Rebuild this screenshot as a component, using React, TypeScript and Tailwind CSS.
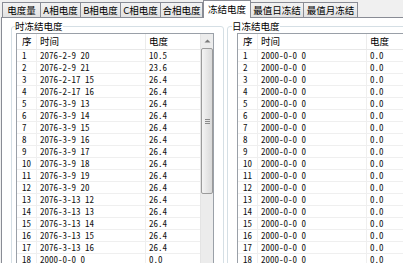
import React from "react";

const leftRows: [string, string, string][] = [
  ["1", "2076-2-9 20", "10.5"],
  ["2", "2076-2-9 21", "23.6"],
  ["3", "2076-2-17 15", "26.4"],
  ["4", "2076-2-17 16", "26.4"],
  ["5", "2076-3-9 13", "26.4"],
  ["6", "2076-3-9 14", "26.4"],
  ["7", "2076-3-9 15", "26.4"],
  ["8", "2076-3-9 16", "26.4"],
  ["9", "2076-3-9 17", "26.4"],
  ["10", "2076-3-9 18", "26.4"],
  ["11", "2076-3-9 19", "26.4"],
  ["12", "2076-3-9 20", "26.4"],
  ["13", "2076-3-13 12", "26.4"],
  ["14", "2076-3-13 13", "26.4"],
  ["15", "2076-3-13 14", "26.4"],
  ["16", "2076-3-13 15", "26.4"],
  ["17", "2076-3-13 16", "26.4"],
  ["18", "2000-0-0 0", "0.0"],
  ["19", "2000-0-0 0", "0.0"],
];

const rightRows: [string, string, string][] = Array.from({ length: 19 }, (_, i) => [
  String(i + 1),
  "2000-0-0 0",
  "0.0",
]);

function Table({ rows, scroll }: { rows: [string, string, string][]; scroll?: boolean }) {
  return (
    <div className="flex h-[260px] border border-[#9aa0a8] bg-white">
      <div className="flex-1 min-w-0 flex flex-col">
        <div className="grid grid-cols-[20px_109px_1fr] h-[16px] border-b border-[#e8e8e8] text-[9.5px] leading-[15px]">
          <div className="pl-[5px] border-r border-[#ececec]">序</div>
          <div className="pl-[3px] border-r border-[#ececec]">时间</div>
          <div className="pl-[3px] whitespace-nowrap">电度</div>
        </div>
        {rows.map((r, i) => (
          <div
            key={i}
            className="grid grid-cols-[20px_109px_1fr] h-[12px] border-b border-[#efefef] text-[9px] leading-[11px] text-[#111] font-['Noto_Sans_Mono_CJK_SC','Noto_Sans_CJK_SC',monospace]"
          >
            <div className="pl-[5px] border-r border-[#efefef] whitespace-pre">{r[0]}</div>
            <div className="pl-[3px] border-r border-[#efefef] whitespace-pre">{r[1]}</div>
            <div className="pl-[3px] whitespace-pre">{r[2]}</div>
          </div>
        ))}
      </div>
      {scroll && (
        <div className="w-[13px] flex flex-col bg-[#ececec] border-l border-[#e4e4e4]">
          <div className="h-[14px] flex items-center justify-center">
            <svg width="7" height="4" viewBox="0 0 7 4">
              <path d="M0.5 3.5 L3.5 0.5 L6.5 3.5 Z" fill="#7a7a7a" />
            </svg>
          </div>
          <div className="h-[146px] rounded-[2px] border border-[#9b9b9b] bg-linear-to-r from-[#f4f4f4] to-[#d9d9d9] flex flex-col items-center justify-center gap-[1px]">
            <div className="w-[5px] h-px bg-[#8a8a8a]" />
            <div className="w-[5px] h-px bg-[#8a8a8a]" />
            <div className="w-[5px] h-px bg-[#8a8a8a]" />
          </div>
        </div>
      )}
    </div>
  );
}

function Tab({ label, cls }: { label: string; cls: string }) {
  return (
    <div
      className={
        "h-[15px] flex items-center justify-center text-[9.5px] leading-[12px] whitespace-nowrap border-t border-[#898c95] bg-linear-to-b from-[#f3f3f3] to-[#e2e2e2] " +
        cls
      }
    >
      {label}
    </div>
  );
}

export default function App() {
  return (
    <div className="w-[403px] h-[263px] overflow-hidden bg-[#f0f0f0] text-black font-['Noto_Sans_CJK_SC',sans-serif]">
      <div className="flex items-end h-[17px] pl-[2px]">
        <Tab label="电度量" cls="w-[38px] border-l" />
        <Tab label="A相电度" cls="w-[40px] border-l" />
        <Tab label="B相电度" cls="w-[40px] border-l" />
        <Tab label="C相电度" cls="w-[40px] border-l" />
        <Tab label="合相电度" cls="w-[43px] border-l border-r" />
        <div className="relative z-10 -mb-px h-[18px] w-[48px] flex items-start justify-center pt-[2px] text-[9.5px] leading-[12px] whitespace-nowrap bg-white border-l border-t border-r border-[#898c95]">
          冻结电度
        </div>
        <Tab label="最值日冻结" cls="w-[53px] border-r" />
        <Tab label="最值月冻结" cls="w-[54px] border-r" />
      </div>
      <div className="ml-[1px] h-[260px] border-l border-t border-[#898c95] bg-white flex items-start pt-[2px]">
        <fieldset className="ml-[9px] w-[213px] shrink-0 border border-[#d5dfe5] rounded-[3px] pl-[4px] pr-[9px] pt-[1px]">
          <legend className="-ml-[1px] text-[9.5px] leading-[12px] px-0">时冻结电度</legend>
          <Table rows={leftRows} scroll />
        </fieldset>
        <fieldset className="ml-[3px] w-[220px] shrink-0 border border-[#d5dfe5] rounded-[3px] pl-[9px] pt-[1px]">
          <legend className="-ml-[5px] text-[9.5px] leading-[12px] px-0">日冻结电度</legend>
          <Table rows={rightRows} />
        </fieldset>
      </div>
    </div>
  );
}
